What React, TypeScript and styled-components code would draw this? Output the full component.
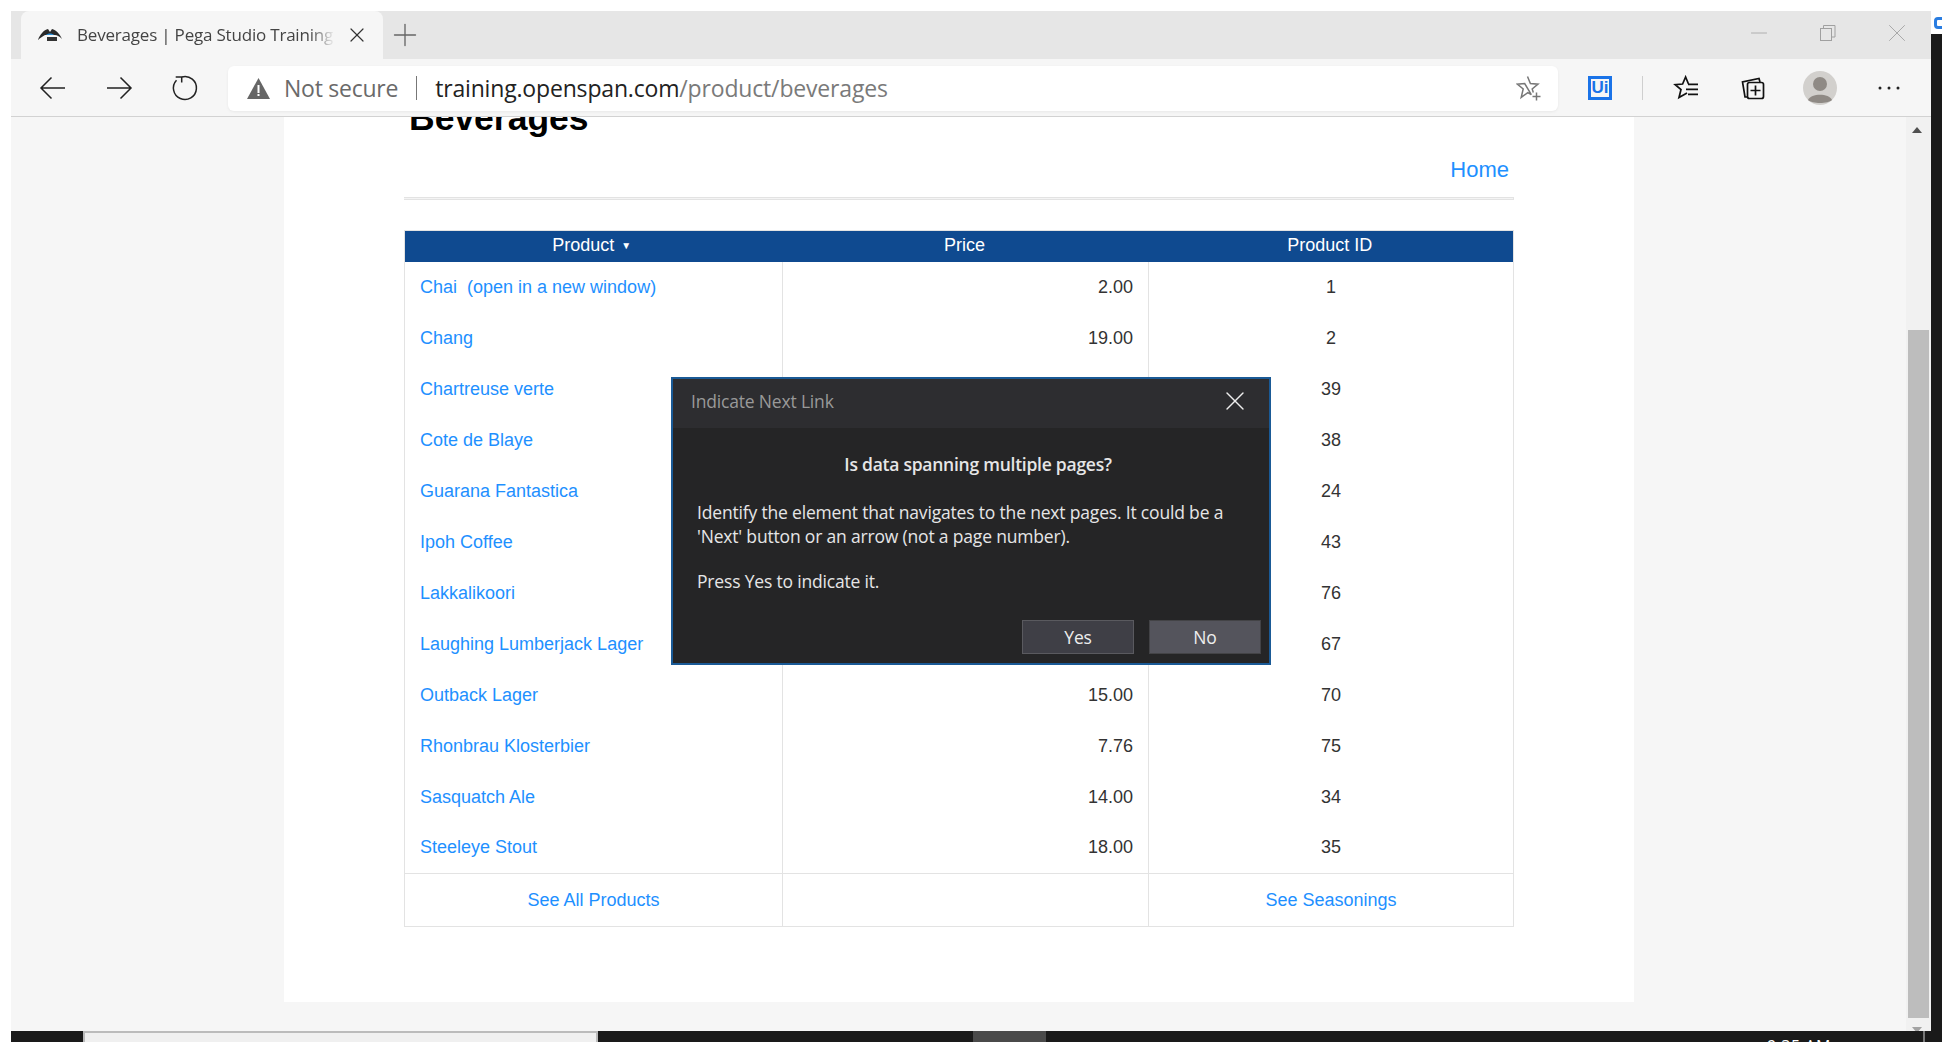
import React from 'react';
import styled, { createGlobalStyle } from 'styled-components';
import { Plus, X, Minus } from 'lucide-react';

const GlobalStyle = createGlobalStyle`
  html, body {
    margin: 0;
    padding: 0;
    background: #fff;
    overflow: hidden;
  }
  * { box-sizing: border-box; }
`;

const UI_FONT = `'Open Sans', 'Noto Sans', sans-serif`;
const PAGE_FONT = `'Liberation Sans', Arial, sans-serif`;

const Screen = styled.div`
  width: 1942px;
  height: 1042px;
  padding: 11px 0 0 11px;
  display: flex;
  position: relative;
  overflow: hidden;
`;

const Browser = styled.div`
  width: 1920px;
  height: 1031px;
  display: flex;
  flex-direction: column;
`;

const EdgeStrip = styled.div`
  width: 11px;
  margin-top: 23px;
  background: #1a1a1a;
`;

const EdgeBadge = styled.div`
  position: absolute;
  top: 17px;
  left: 1934px;
  width: 14px;
  height: 12px;
  border-radius: 4px;
  border: 3px solid #2a7de1;
  background: #fff;
`;

const TabStrip = styled.div`
  height: 48px;
  background: #e6e6e6;
  display: flex;
  align-items: stretch;
  padding-left: 10px;
  flex: none;
`;

const Tab = styled.div`
  width: 362px;
  background: #f6f6f6;
  border-radius: 8px 8px 0 0;
  display: flex;
  align-items: center;
  padding-left: 16px;
  color: #444;
  font: 17px ${UI_FONT};
`;

const TabTitle = styled.span`
  width: 258px;
  margin: 0 0 2px 14px;
  white-space: nowrap;
  overflow: hidden;
  letter-spacing: -0.2px;
  -webkit-mask-image: linear-gradient(to right, #000 90%, transparent);
  mask-image: linear-gradient(to right, #000 90%, transparent);
`;

const TabClose = styled.span`
  display: flex;
  margin-left: 10px;
  color: #333;
`;

const NewTab = styled.span`
  display: flex;
  margin-left: 4px;
  align-items: center;
  color: #666;
`;

const WindowControls = styled.div`
  margin-left: auto;
  display: flex;
  align-items: center;
  padding-bottom: 5px;
  color: #a0a0a0;
`;

const WindowButton = styled.span`
  width: 69px;
  display: flex;
  justify-content: center;
`;

const Toolbar = styled.div`
  height: 58px;
  flex: none;
  background: #f6f6f6;
  border-bottom: 1px solid #d2d2d2;
  display: flex;
  align-items: center;
  position: relative;
`;

const NavButton = styled.span`
  width: 66px;
  display: flex;
  justify-content: center;
  color: #222;
  &:first-child { margin-left: 9px; }
`;

const AddressBar = styled.div`
  width: 1330px;
  height: 45px;
  margin-left: 10px;
  margin-top: 1px;
  background: #fff;
  border-radius: 6px;
  box-shadow: 0 1px 3px rgba(0, 0, 0, 0.06);
  display: flex;
  align-items: center;
  padding: 0 16px 0 19px;
  font: 23px ${UI_FONT};
  letter-spacing: -0.25px;
  white-space: nowrap;
`;

const NotSecure = styled.span`
  color: #6a6a6a;
  margin-left: 14px;
`;

const AddressDivider = styled.span`
  width: 1px;
  height: 24px;
  background: #777;
  margin: 0 18px 0 18px;
`;

const UrlHost = styled.span`
  color: #222;
  letter-spacing: -0.17px;
`;

const UrlPath = styled.span`
  color: #7a7a7a;
  letter-spacing: -0.17px;
`;

const BarStar = styled.span`
  margin-left: auto;
  display: flex;
`;

const ToolIcons = styled.div`
  display: flex;
  align-items: center;
  margin-left: 30px;
`;

const UiBadge = styled.span`
  width: 24px;
  height: 24px;
  border: 3px solid #1a73e8;
  color: #1a73e8;
  font: bold 17px/18px ${PAGE_FONT};
  text-align: center;
  letter-spacing: 0;
`;

const ToolDivider = styled.span`
  width: 1px;
  height: 24px;
  background: #cfcfcf;
  margin: 0 30px;
`;

const ToolIcon = styled.span<{ $gap: number }>`
  display: flex;
  margin-left: ${p => p.$gap}px;
`;

const PageArea = styled.div`
  flex: 1;
  min-height: 0;
  background: #f6f6f6;
  display: flex;
  position: relative;
  overflow: hidden;
`;

const PageScroller = styled.div`
  flex: 1;
  min-width: 0;
  padding-left: 273px;
`;

const Content = styled.main`
  display: flow-root;
  width: 1350px;
  height: 885px;
  background: #fff;
  padding: 0 120px;
  font: 18px ${PAGE_FONT};
  color: #333;
`;

// the page is scrolled a little, the heading runs under the toolbar
const Heading = styled.h1`
  margin: -14px 0 0 5px;
  height: 31px;
  font: bold 35.5px/30px ${PAGE_FONT};
  color: #000;
`;

const HomeRow = styled.div`
  height: 63px;
  display: flex;
  justify-content: flex-end;
  align-items: center;
  padding: 9px 5px 0 0;
  font-size: 22px;
`;

const PageLink = styled.a`
  color: #1e90ff;
  text-decoration: none;
  white-space: pre;
`;

const Rule = styled.hr`
  height: 3px;
  margin: 0;
  border: 1px solid #e3e3e3;
  border-width: 1px 1px 1px 0;
  background: #f4f4f4;
`;

const Table = styled.table`
  width: 1109px;
  margin-top: 30px;
  border-collapse: collapse;
  table-layout: fixed;
  border: 1px solid #e3e3e3;
`;

const Th = styled.th`
  height: 31px;
  padding: 0 2px 1px 0;
  background: #0f4a90;
  color: #fff;
  font-weight: normal;
  font-size: 18px;
  text-align: center;
`;

const SortMark = styled.span`
  font-size: 10px;
  margin: 0 2px 0 7px;
  vertical-align: 2px;
`;

const Td = styled.td<{ $align?: string; $ruled?: boolean }>`
  height: ${p => (p.$ruled ? 53 : 51)}px;
  padding: 0 15px;
  text-align: ${p => p.$align || 'left'};
  border-left: 1px solid #e3e3e3;
  border-right: 1px solid #e3e3e3;
  ${p => p.$ruled && 'border-top: 1px solid #e3e3e3;'}
`;

const Scrollbar = styled.div`
  width: 25px;
  flex: none;
  position: relative;
  background: #f1f1f1;
`;

const ScrollThumb = styled.div`
  position: absolute;
  top: 213px;
  bottom: 24px;
  left: 2px;
  width: 21px;
  background: #bdbdbd;
`;

const ScrollArrow = styled.div<{ $up?: boolean }>`
  position: absolute;
  left: 6px;
  ${p => (p.$up ? 'top: 10px;' : 'bottom: 9px;')}
  width: 0;
  height: 0;
  border-left: 5.5px solid transparent;
  border-right: 5.5px solid transparent;
  ${p => (p.$up ? 'border-bottom: 6px solid #505050;' : 'border-top: 6px solid #a3a3a3;')}
`;

const Dialog = styled.div`
  position: absolute;
  left: 671px;
  top: 377px;
  width: 600px;
  height: 288px;
  background: #252526;
  border: 2px solid #1a5a96;
  color: #e6e6e6;
  font: 17.5px ${UI_FONT};
  letter-spacing: -0.18px;
  display: flex;
  flex-direction: column;
`;

const DialogHeader = styled.div`
  height: 49px;
  flex: none;
  background: #2d2d30;
  display: flex;
  align-items: center;
  justify-content: space-between;
  padding: 0 18px 6px 18px;
  color: #999;
`;

const DialogClose = styled.span`
  display: flex;
  color: #eee;
`;

const DialogBody = styled.div`
  flex: 1;
  padding: 24px 24px 0;
`;

const DialogQuestion = styled.div`
  font-weight: 600;
  text-align: center;
  margin-bottom: 24px;
  padding-left: 14px;
  line-height: 24px;
  letter-spacing: -0.25px;
`;

const DialogText = styled.p`
  margin: 0 0 21px;
  line-height: 24px;
`;

const DialogActions = styled.div`
  display: flex;
  justify-content: flex-end;
  gap: 15px;
  padding: 0 8px 9px 0;
`;

const DialogButton = styled.button<{ $hover?: boolean }>`
  width: 112px;
  height: 34px;
  background: ${p => (p.$hover ? '#54545c' : '#3f3f46')};
  border: 1px solid ${p => (p.$hover ? '#434346' : '#5a5a5f')};
  color: #eee;
  font: 17.5px ${UI_FONT};
  letter-spacing: -0.18px;
  padding: 0;
`;

const Taskbar = styled.div`
  position: absolute;
  left: 11px;
  right: 0;
  bottom: 0;
  height: 11px;
  background: #1a1a1a;
  display: flex;
`;

const TaskbarWindow = styled.div`
  width: 515px;
  margin-left: 72px;
  background: #f0f0f0;
  border: 2px solid #bbb;
  border-bottom: 0;
`;

const TaskbarActive = styled.div`
  width: 73px;
  margin-left: 375px;
  background: #4a4a4a;
`;

const TaskbarLine = styled.div`
  position: absolute;
  left: 1912px;
  top: 0;
  width: 2px;
  height: 11px;
  background: #777;
`;

const Clock = styled.div`
  position: absolute;
  left: 1756px;
  top: 7px;
  color: #fff;
  font: 16px/16px ${UI_FONT};
  letter-spacing: 0.5px;
`;

const products = [
  ['Chai  (open in a new window)', '2.00', '1'],
  ['Chang', '19.00', '2'],
  ['Chartreuse verte', '18.00', '39'],
  ['Cote de Blaye', '263.50', '38'],
  ['Guarana Fantastica', '4.50', '24'],
  ['Ipoh Coffee', '46.00', '43'],
  ['Lakkalikoori', '18.00', '76'],
  ['Laughing Lumberjack Lager', '14.00', '67'],
  ['Outback Lager', '15.00', '70'],
  ['Rhonbrau Klosterbier', '7.76', '75'],
  ['Sasquatch Ale', '14.00', '34'],
  ['Steeleye Stout', '18.00', '35'],
];

const PegaLogo = () => (
  <svg width="26" height="14" viewBox="0 0 26 14">
    <path d="M1 12 C3 6 7 2 11 1 L13 4 L15 1 C19 2 23 6 25 11 C22 8 20 7 18 7 H8 C6 8 3 10 1 12 Z" fill="#2a2a2a" />
    <path d="M9 7 C11 5 15 5 17 7 Z" fill="#2a8fd8" />
    <rect x="10" y="9" width="10" height="4" fill="#333" />
  </svg>
);

const BackIcon = () => (
  <svg width="28" height="24" viewBox="0 0 28 24" fill="none" stroke="#222" strokeWidth="1.5">
    <path d="M26 12 H2 M12.5 1.5 L2 12 L12.5 22.5" />
  </svg>
);

const ForwardIcon = () => (
  <svg width="28" height="24" viewBox="0 0 28 24" fill="none" stroke="#222" strokeWidth="1.5">
    <path d="M2 12 H26 M15.5 1.5 L26 12 L15.5 22.5" />
  </svg>
);

const ReloadIcon = () => (
  <svg width="30" height="30" viewBox="0 0 30 30" fill="none" stroke="#222" strokeWidth="1.5">
    <path d="M12 3.9 A11.5 11.5 0 1 1 6.5 7.2" />
    <path d="M5.7 4 H11.7 V9.5" />
  </svg>
);

const WarnIcon = () => (
  <svg width="23" height="21" viewBox="0 0 23 21">
    <path d="M11.5 0 L23 21 H0 Z" fill="#666" />
    <rect x="10.5" y="7" width="2" height="8" fill="#fff" />
    <rect x="10.5" y="16" width="2" height="2" fill="#fff" />
  </svg>
);

const StarPlusIcon = () => (
  <svg width="26" height="26" viewBox="0 0 26 26" fill="none" stroke="#777" strokeWidth="1.5">
    <path d="M11.5 1.5 L14.4 8.6 L22 9.2 L16.2 14 L17.3 17.5 M15.3 19.7 L11.8 17.6 L5.2 22.4 L7.2 14 L1.3 9.2 L8.7 8.6 Z" />
    <path d="M16.5 21.5 H24.5 M20.5 17.5 V25.5" />
  </svg>
);

const FavoritesIcon = () => (
  <svg width="26" height="26" viewBox="0 0 26 26" fill="none" stroke="#111" strokeWidth="1.7">
    <path d="M15.5 9 L12.6 2 L9.6 9 L2.2 9.6 L8 14.5 L6 22.6 L14 18" />
    <path d="M15 9.3 H25 M13 14.3 H25 M15 19.3 H25" />
  </svg>
);

const CollectionsIcon = () => (
  <svg width="26" height="26" viewBox="0 0 26 26" fill="none" stroke="#111" strokeWidth="1.7">
    <path d="M7 22 L5 22 L2.5 7 L19 3.5 L20 7" />
    <rect x="7.5" y="7.5" width="16" height="16" rx="2" />
    <path d="M15.5 10.5 V20.5 M10.5 15.5 H20.5" />
  </svg>
);

const AvatarIcon = () => (
  <svg width="34" height="34" viewBox="0 0 34 34">
    <circle cx="17" cy="17" r="17" fill="#d2d0cd" />
    <circle cx="17" cy="13" r="7" fill="#8f8a85" />
    <path d="M5 29 C8 22 26 22 29 29 C25 33 9 33 5 29 Z" fill="#8f8a85" />
  </svg>
);

const DotsIcon = () => (
  <svg width="24" height="6" viewBox="0 0 24 6" fill="#222">
    <circle cx="3" cy="3" r="1.5" />
    <circle cx="12" cy="3" r="1.5" />
    <circle cx="21" cy="3" r="1.5" />
  </svg>
);

const RestoreIcon = () => (
  <svg width="16" height="16" viewBox="0 0 16 16" fill="none" stroke="#a0a0a0" strokeWidth="1">
    <rect x="0.5" y="3.5" width="11" height="12" />
    <path d="M3.5 3.5 V0.5 H15 V12 H11.5" />
  </svg>
);

const App = () => (
  <>
    <GlobalStyle />
    <Screen>
      <Browser>
        <TabStrip>
          <Tab>
            <PegaLogo />
            <TabTitle>Beverages | Pega Studio Training</TabTitle>
            <TabClose>
              <X size={24} strokeWidth={1.2} />
            </TabClose>
          </Tab>
          <NewTab>
            <Plus size={36} strokeWidth={0.9} />
          </NewTab>
          <WindowControls>
            <WindowButton>
              <Minus size={26} strokeWidth={0.7} />
            </WindowButton>
            <WindowButton>
              <RestoreIcon />
            </WindowButton>
            <WindowButton>
              <X size={30} strokeWidth={0.7} />
            </WindowButton>
          </WindowControls>
        </TabStrip>
        <Toolbar>
          <NavButton>
            <BackIcon />
          </NavButton>
          <NavButton>
            <ForwardIcon />
          </NavButton>
          <NavButton>
            <ReloadIcon />
          </NavButton>
          <AddressBar>
            <WarnIcon />
            <NotSecure>Not secure</NotSecure>
            <AddressDivider />
            <UrlHost>training.openspan.com</UrlHost>
            <UrlPath>/product/beverages</UrlPath>
            <BarStar>
              <StarPlusIcon />
            </BarStar>
          </AddressBar>
          <ToolIcons>
            <UiBadge>Ui</UiBadge>
            <ToolDivider />
            <FavoritesIcon />
            <ToolIcon $gap={41}>
              <CollectionsIcon />
            </ToolIcon>
            <ToolIcon $gap={37}>
              <AvatarIcon />
            </ToolIcon>
            <ToolIcon $gap={40}>
              <DotsIcon />
            </ToolIcon>
          </ToolIcons>
        </Toolbar>
        <PageArea>
          <PageScroller>
            <Content>
              <Heading>Beverages</Heading>
              <HomeRow>
                <PageLink href="#home">Home</PageLink>
              </HomeRow>
              <Rule />
              <Table>
                <colgroup>
                  <col width="378" />
                  <col width="366" />
                  <col width="365" />
                </colgroup>
                <thead>
                  <tr>
                    <Th>
                      Product<SortMark>▼</SortMark>
                    </Th>
                    <Th>Price</Th>
                    <Th>Product ID</Th>
                  </tr>
                </thead>
                <tbody>
                  {products.map(([name, price, id]) => (
                    <tr key={id}>
                      <Td>
                        <PageLink href="#product">{name}</PageLink>
                      </Td>
                      <Td $align="right">{price}</Td>
                      <Td $align="center">{id}</Td>
                    </tr>
                  ))}
                  <tr>
                    <Td $align="center" $ruled>
                      <PageLink href="#all">See All Products</PageLink>
                    </Td>
                    <Td $ruled />
                    <Td $align="center" $ruled>
                      <PageLink href="#seasonings">See Seasonings</PageLink>
                    </Td>
                  </tr>
                </tbody>
              </Table>
            </Content>
          </PageScroller>
          <Scrollbar>
            <ScrollArrow $up />
            <ScrollThumb />
            <ScrollArrow />
          </Scrollbar>
        </PageArea>
      </Browser>
      <EdgeStrip />
      <EdgeBadge />
      <Dialog>
        <DialogHeader>
          Indicate Next Link
          <DialogClose>
            <X size={32} strokeWidth={1} />
          </DialogClose>
        </DialogHeader>
        <DialogBody>
          <DialogQuestion>Is data spanning multiple pages?</DialogQuestion>
          <DialogText>
            Identify the element that navigates to the next pages. It could be a
            <br />
            'Next' button or an arrow (not a page number).
          </DialogText>
          <DialogText>Press Yes to indicate it.</DialogText>
        </DialogBody>
        <DialogActions>
          <DialogButton>Yes</DialogButton>
          <DialogButton $hover>No</DialogButton>
        </DialogActions>
      </Dialog>
      <Taskbar>
        <TaskbarWindow />
        <TaskbarActive />
        <Clock>9:35 AM</Clock>
        <TaskbarLine />
      </Taskbar>
    </Screen>
  </>
);

export default App;
